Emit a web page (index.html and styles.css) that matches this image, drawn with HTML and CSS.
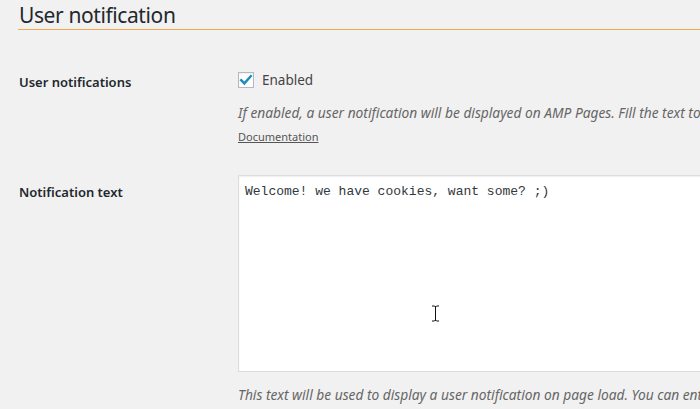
FILE: index.html
```html
<!DOCTYPE html>
<html>
<head>
<meta charset="utf-8">
<link rel="stylesheet" href="styles.css">
</head>
<body>
<div class="wrap">
  <h2 class="title">User notification</h2>
  <div class="row row-first">
    <div class="label">User notifications</div>
    <div class="field">
      <label class="check">
        <span class="box">
          <svg width="14" height="14" viewBox="0 0 14 14"><path d="M2.2 7.2 L5.4 10.4 L11.8 3.2" fill="none" stroke="#1e8cbe" stroke-width="2.4" stroke-linecap="square"/></svg>
        </span>
        <span class="check-text">Enabled</span>
      </label>
      <p class="desc">If enabled, a user notification will be displayed on AMP Pages. Fill the text to display.</p>
      <a class="doc" href="#">Documentation</a>
    </div>
  </div>
  <div class="row row-second">
    <div class="label">Notification text</div>
    <div class="field">
      <div class="textarea">Welcome! we have cookies, want some? ;)</div>
      <p class="desc desc-bottom">This text will be used to display a user notification on page load. You can enter.</p>
    </div>
  </div>
</div>
<svg class="cursor" width="9" height="17" viewBox="0 0 9 17"><path d="M1 1 H3.5 M5.5 1 H8 M4.5 1.5 V15.5 M1 16 H3.5 M5.5 16 H8 M3.5 1.5 H5.5 M3.5 15.5 H5.5" stroke="#111" stroke-width="1" fill="none"/></svg>
</body>
</html>
```
FILE: styles.css
```css
html, body {
  margin: 0;
  padding: 0;
  background: #f1f1f1;
  width: 700px;
  height: 409px;
  overflow: hidden;
  position: relative;
}
body {
  font-family: "Noto Sans", "Open Sans", sans-serif;
  color: #23282d;
}
.wrap {
  margin-left: 18px;
  width: 900px;
}
.title {
  margin: 0;
  padding: 1px 0 0 1px;
  height: 28px;
  font-size: 21px;
  letter-spacing: -0.4px;
  line-height: 28px;
  font-weight: 400;
  color: #23282d;
  border-bottom: 1px solid #f2a94f;
}
.row {
  display: flex;
}
.row-first {
  margin-top: 42px;
}
.row-second {
  margin-top: 30px;
}
.label {
  width: 219px;
  padding-left: 1px;
  font-size: 13px;
  font-weight: 600;
  color: #23282d;
  line-height: 18px;
}
.row-first .label {
  margin-top: 1px;
}
.row-second .label {
  margin-top: 8px;
}
.field {
  flex: 1;
}
.check {
  display: flex;
  align-items: center;
  height: 16px;
  margin-top: 0;
}
.box {
  width: 14px;
  height: 14px;
  border: 1px solid #b4b9be;
  background: #fff;
  display: flex;
  align-items: center;
  justify-content: center;
  box-shadow: inset 0 1px 2px rgba(0,0,0,0.07);
}
.box svg {
  display: block;
}
.check-text {
  margin-left: 8px;
  font-size: 13.5px;
  color: #444;
  line-height: 16px;
}
.desc {
  margin: 16px 0 0;
  font-size: 13.75px;
  font-style: italic;
  color: #666;
  white-space: nowrap;
  line-height: 18px;
}
.doc {
  display: block;
  margin-top: 7px;
  font-size: 11px;
  color: #555;
  text-decoration: underline;
  line-height: 16px;
}
.textarea {
  width: 600px;
  height: 197px;
  box-sizing: border-box;
  border: 1px solid #ddd;
  background: #fff;
  padding: 7px 6px;
  font-family: "Liberation Mono", "DejaVu Sans Mono", monospace;
  font-size: 13px;
  line-height: 18px;
  color: #32373c;
  box-shadow: inset 0 1px 2px rgba(0,0,0,0.07);
}
.desc-bottom {
  margin-top: 14px;
}
.cursor {
  position: absolute;
  left: 431px;
  top: 305px;
}
```
